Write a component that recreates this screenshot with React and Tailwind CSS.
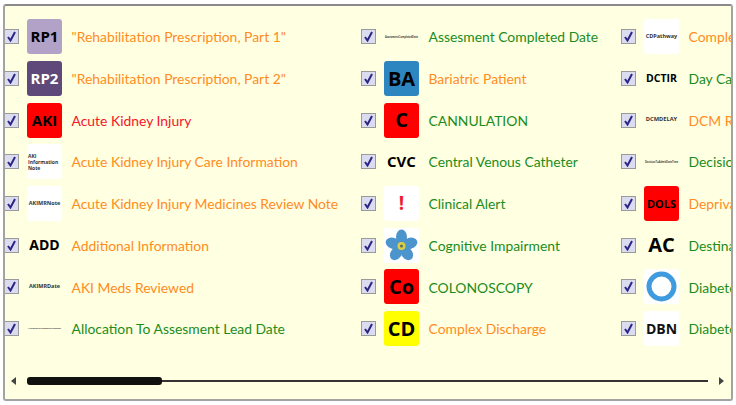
const ORANGE = "text-[#ff8c1f]";
const GREEN = "text-[#1c8c1c]";
const RED = "text-[#f5142a]";

function CheckBox() {
  return (
    <div className="w-[15px] h-[15px] shrink-0 border-[1.5px] border-[#9a9a9a] bg-[#dcdcf0] flex items-center justify-center">
      <svg width="11" height="11" viewBox="0 0 11 11" fill="none">
        <path d="M2 6 L4.5 9.5 L9 1" stroke="#2b2685" strokeWidth="2" />
      </svg>
    </div>
  );
}

function Flower() {
  return (
    <svg width="35" height="35" viewBox="0 0 35 35">
      <rect width="35" height="35" fill="#fff" />
      <g fill="#4b94cc">
        <ellipse cx="17.5" cy="9" rx="5.5" ry="7.5" />
        <ellipse cx="17.5" cy="9" rx="5.5" ry="7.5" transform="rotate(72 17.5 18)" />
        <ellipse cx="17.5" cy="9" rx="5.5" ry="7.5" transform="rotate(144 17.5 18)" />
        <ellipse cx="17.5" cy="9" rx="5.5" ry="7.5" transform="rotate(216 17.5 18)" />
        <ellipse cx="17.5" cy="9" rx="5.5" ry="7.5" transform="rotate(288 17.5 18)" />
      </g>
      <circle cx="17.5" cy="18" r="4" fill="#d9cf45" />
      <circle cx="17.5" cy="18" r="1.5" fill="#5a6a70" />
    </svg>
  );
}

function Ring() {
  return (
    <svg width="35" height="35" viewBox="0 0 35 35">
      <rect width="35" height="35" rx="3" fill="#fff" />
      <circle cx="17.5" cy="17.5" r="12.5" fill="none" stroke="#3f9ade" strokeWidth="5" />
    </svg>
  );
}

function Badge({ className, children }) {
  return (
    <div className={`w-[35px] h-[35px] shrink-0 rounded-[3px] flex items-center justify-center font-bold leading-none whitespace-nowrap overflow-hidden ${className}`}>
      {children}
    </div>
  );
}

const col1 = [
  { icon: <Badge className="bg-[#b3a2c7] text-black text-[15px]">RP1</Badge>, label: '"Rehabilitation Prescription, Part 1"', color: ORANGE },
  { icon: <Badge className="bg-[#5f497a] text-white text-[15px]">RP2</Badge>, label: '"Rehabilitation Prescription, Part 2"', color: ORANGE },
  { icon: <Badge className="bg-[#ff0000] text-black text-[15px]">AKI</Badge>, label: "Acute Kidney Injury", color: RED },
  { icon: <Badge className="bg-white text-[#333] text-[5px] !leading-[6px] !justify-start pl-px whitespace-normal">AKI<br />Information<br />Note</Badge>, label: "Acute Kidney Injury Care Information", color: ORANGE },
  { icon: <Badge className="bg-white text-[#333] text-[5.5px]">AKIMRNote</Badge>, label: "Acute Kidney Injury Medicines Review Note", color: ORANGE },
  { icon: <Badge className="text-black text-[14px]">ADD</Badge>, label: "Additional Information", color: ORANGE },
  { icon: <Badge className="text-[#333] text-[5.5px]">AKIMRDate</Badge>, label: "AKI Meds Reviewed", color: ORANGE },
  { icon: <Badge className="text-[#444] text-[2px]">AllocationToAssesmentLeadDate</Badge>, label: "Allocation To Assesment Lead Date", color: GREEN },
];

const col2 = [
  { icon: <Badge className="text-[#444] text-[2.5px]">AssesmentCompletedDate</Badge>, label: "Assesment Completed Date", color: GREEN },
  { icon: <Badge className="bg-[#2e86c1] text-black text-[20px]">BA</Badge>, label: "Bariatric Patient", color: ORANGE },
  { icon: <Badge className="bg-[#ff0000] text-black text-[20px]">C</Badge>, label: "CANNULATION", color: GREEN },
  { icon: <Badge className="text-black text-[15px]">CVC</Badge>, label: "Central Venous Catheter", color: GREEN },
  { icon: <Badge className="bg-white text-[#f01c2c] text-[19px]">!</Badge>, label: "Clinical Alert", color: GREEN },
  { icon: <Flower />, label: "Cognitive Impairment", color: GREEN },
  { icon: <Badge className="bg-[#ff0000] text-black text-[20px]">Co</Badge>, label: "COLONOSCOPY", color: GREEN },
  { icon: <Badge className="bg-[#ffff00] text-black text-[20px]">CD</Badge>, label: "Complex Discharge", color: ORANGE },
];

const col3 = [
  { icon: <Badge className="bg-white text-[#333] text-[5.5px]">CDPathway</Badge>, label: "Complex Discharge Pathway", color: ORANGE },
  { icon: <Badge className="text-black text-[10.5px]">DCTIR</Badge>, label: "Day Case TCI Required", color: GREEN },
  { icon: <Badge className="text-[#333] text-[5.7px]">DCMDELAY</Badge>, label: "DCM Review", color: ORANGE },
  { icon: <Badge className="text-[#444] text-[2.5px]">DecisionToAdmitDateTime</Badge>, label: "Decision To Admit", color: GREEN },
  { icon: <Badge className="bg-[#ff0000] text-black text-[11px]">DOLS</Badge>, label: "Deprivation Of Liberty", color: ORANGE },
  { icon: <Badge className="text-black text-[20px]">AC</Badge>, label: "Destination", color: GREEN },
  { icon: <Ring />, label: "Diabetes", color: GREEN },
  { icon: <Badge className="bg-white text-[#111] text-[14px]">DBN</Badge>, label: "Diabetes Nurse", color: GREEN },
];

function Column({ items, className }) {
  return (
    <div className={`flex flex-col ${className}`}>
      {items.map((item) => (
        <div key={item.label} className="h-[41.7px] flex items-center">
          <CheckBox />
          <div className="ml-2">{item.icon}</div>
          <span className={`ml-[9.5px] pt-[2px] whitespace-nowrap text-[13.9px] font-['Lato',sans-serif] ${item.color}`}>{item.label}</span>
        </div>
      ))}
    </div>
  );
}

export default function App() {
  return (
    <div className="w-[736px] h-[405px] bg-white pt-1 pl-[3px] pr-[3px] pb-1 overflow-hidden font-['Open_Sans',sans-serif]">
      <div className="w-full h-full bg-[#ffffe1] border-2 border-[#a3a3a3] border-t-[#8a8a8a] rounded-[3px] flex flex-col overflow-hidden">
        <div className="grid grid-cols-[356px_260px_300px] pt-[10px] overflow-hidden">
          <Column items={col1} className="-ml-px" />
          <Column items={col2} />
          <Column items={col3} />
        </div>
        <div className="mt-[27px] flex items-center pl-[6px]">
          <div className="w-0 h-0 border-y-[4px] border-y-transparent border-r-[5px] border-r-[#444]" />
          <div className="ml-[11px] w-[681px] flex items-center">
            <div className="w-[135px] h-[8px] rounded-[3px] bg-[#111]" />
            <div className="flex-1 h-[2px] bg-[#333]" />
          </div>
          <div className="ml-[11px] w-0 h-0 border-y-[4px] border-y-transparent border-l-[5px] border-l-[#444]" />
        </div>
      </div>
    </div>
  );
}
